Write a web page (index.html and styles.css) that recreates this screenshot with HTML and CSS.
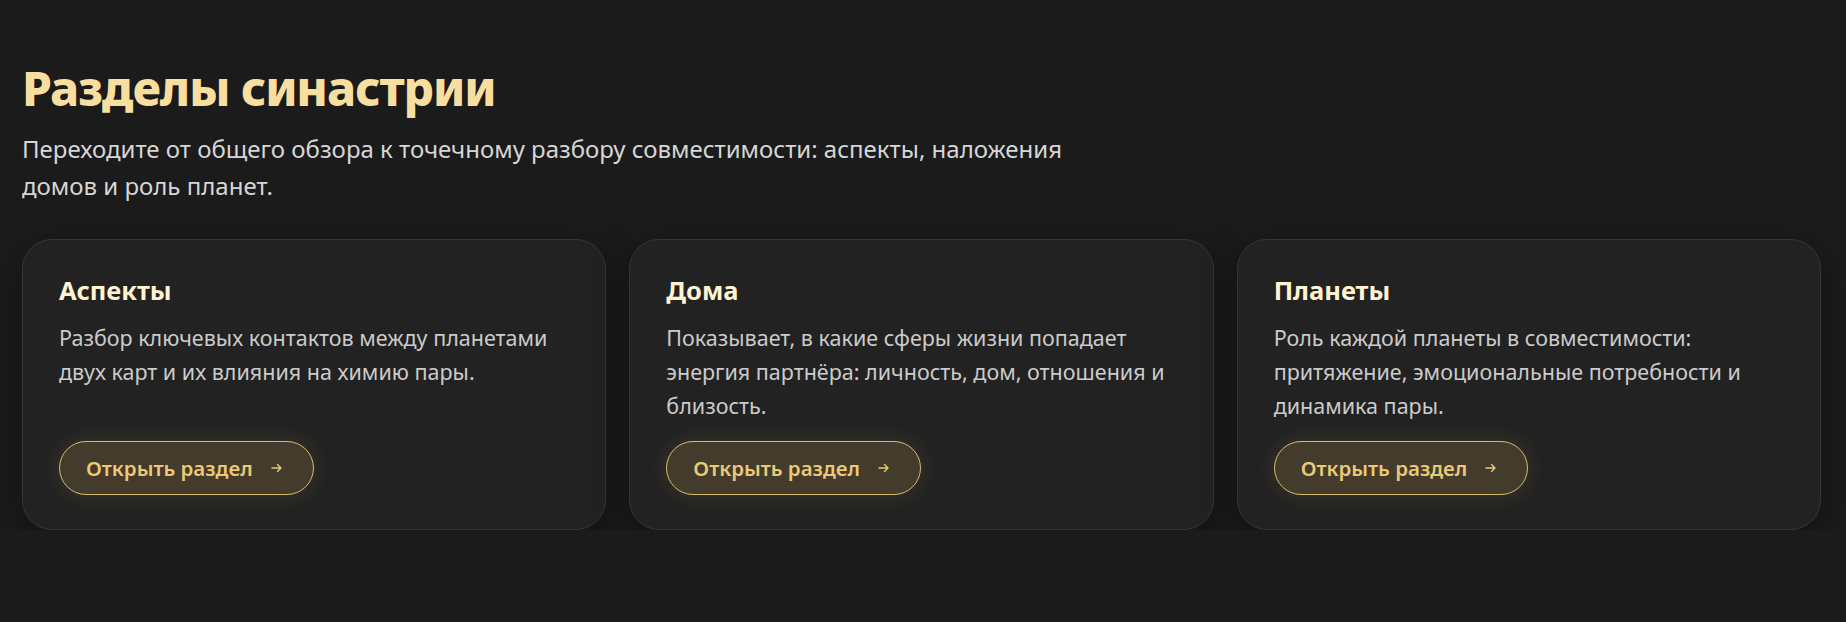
FILE: index.html
```html
<!DOCTYPE html>
<html lang="ru">
<head>
    <meta charset="UTF-8">
    <meta name="viewport" content="width=device-width, initial-scale=1.0">
    <title>Разделы синастрии</title>
    <link rel="stylesheet" href="styles.css">
</head>
<body>
    <section class="sections">
        <h2 class="sections-title">Разделы синастрии</h2>
        <p class="sections-lead">Переходите от общего обзора к точечному разбору совместимости: аспекты, наложения домов и роль планет.</p>

        <div class="cards">
            <div class="card">
                <h3 class="card-title">Аспекты</h3>
                <p class="card-text">Разбор ключевых контактов между планетами двух карт и их влияния на химию пары.</p>
                <a href="#" class="card-btn">Открыть раздел
                    <svg class="arrow" viewBox="0 0 12 10" width="12" height="10"><path d="M1 5h9M6.5 1.5L10 5L6.5 8.5" fill="none" stroke="currentColor" stroke-width="1.4" stroke-linecap="round" stroke-linejoin="round"/></svg>
                </a>
            </div>
            <div class="card">
                <h3 class="card-title">Дома</h3>
                <p class="card-text">Показывает, в какие сферы жизни попадает энергия партнёра: личность, дом, отношения и близость.</p>
                <a href="#" class="card-btn">Открыть раздел
                    <svg class="arrow" viewBox="0 0 12 10" width="12" height="10"><path d="M1 5h9M6.5 1.5L10 5L6.5 8.5" fill="none" stroke="currentColor" stroke-width="1.4" stroke-linecap="round" stroke-linejoin="round"/></svg>
                </a>
            </div>
            <div class="card">
                <h3 class="card-title">Планеты</h3>
                <p class="card-text">Роль каждой планеты в совместимости: притяжение, эмоциональные потребности и динамика пары.</p>
                <a href="#" class="card-btn">Открыть раздел
                    <svg class="arrow" viewBox="0 0 12 10" width="12" height="10"><path d="M1 5h9M6.5 1.5L10 5L6.5 8.5" fill="none" stroke="currentColor" stroke-width="1.4" stroke-linecap="round" stroke-linejoin="round"/></svg>
                </a>
            </div>
        </div>
    </section>
</body>
</html>
```

FILE: styles.css
```css
*{
    margin: 0;
    padding: 0;
    box-sizing: border-box;
}
body{
    background: #1b1b1b;
    font-family: "Noto Sans", "Open Sans", sans-serif;
    color: #d0d0d0;
}
.sections{
    padding: 59px 25px 0 22px;
}
.sections-title{
    font-size: 48px;
    line-height: 1.2;
    font-weight: 800;
    color: #f8dfa0;
    letter-spacing: -1.1px;
}
.sections-lead{
    max-width: 1085px;
    margin-top: 13px;
    font-size: 24px;
    line-height: 37.7px;
    color: #d6d6d6;
}
.cards{
    display: grid;
    grid-template-columns: repeat(3, 1fr);
    gap: 23px;
    margin-top: 34px;
}
.card{
    display: flex;
    flex-direction: column;
    padding: 33px 36px 34px;
    background: #222222;
    border: 1px solid #363636;
    border-radius: 30px;
    box-shadow: 0 12px 36px rgba(0, 0, 0, 0.35);
}
.card-title{
    font-size: 25.5px;
    line-height: 34px;
    font-weight: 700;
    color: #fff3d2;
}
.card-text{
    margin-top: 14px;
    margin-bottom: 18px;
    font-size: 21.5px;
    line-height: 34px;
    color: #cbcbcb;
}
.card-btn{
    display: inline-flex;
    align-items: center;
    align-self: flex-start;
    gap: 18px;
    height: 54px;
    margin-top: auto;
    padding: 0 30px 0 26px;
    border: 1.5px solid #d9bb6e;
    border-radius: 27px;
    background: #433b2b;
    color: #ebc977;
    font-size: 20.5px;
    font-weight: 600;
    text-decoration: none;
    box-shadow: 0 0 22px rgba(230, 190, 100, 0.14);
}
.card-btn .arrow{
    display: block;
}
```
